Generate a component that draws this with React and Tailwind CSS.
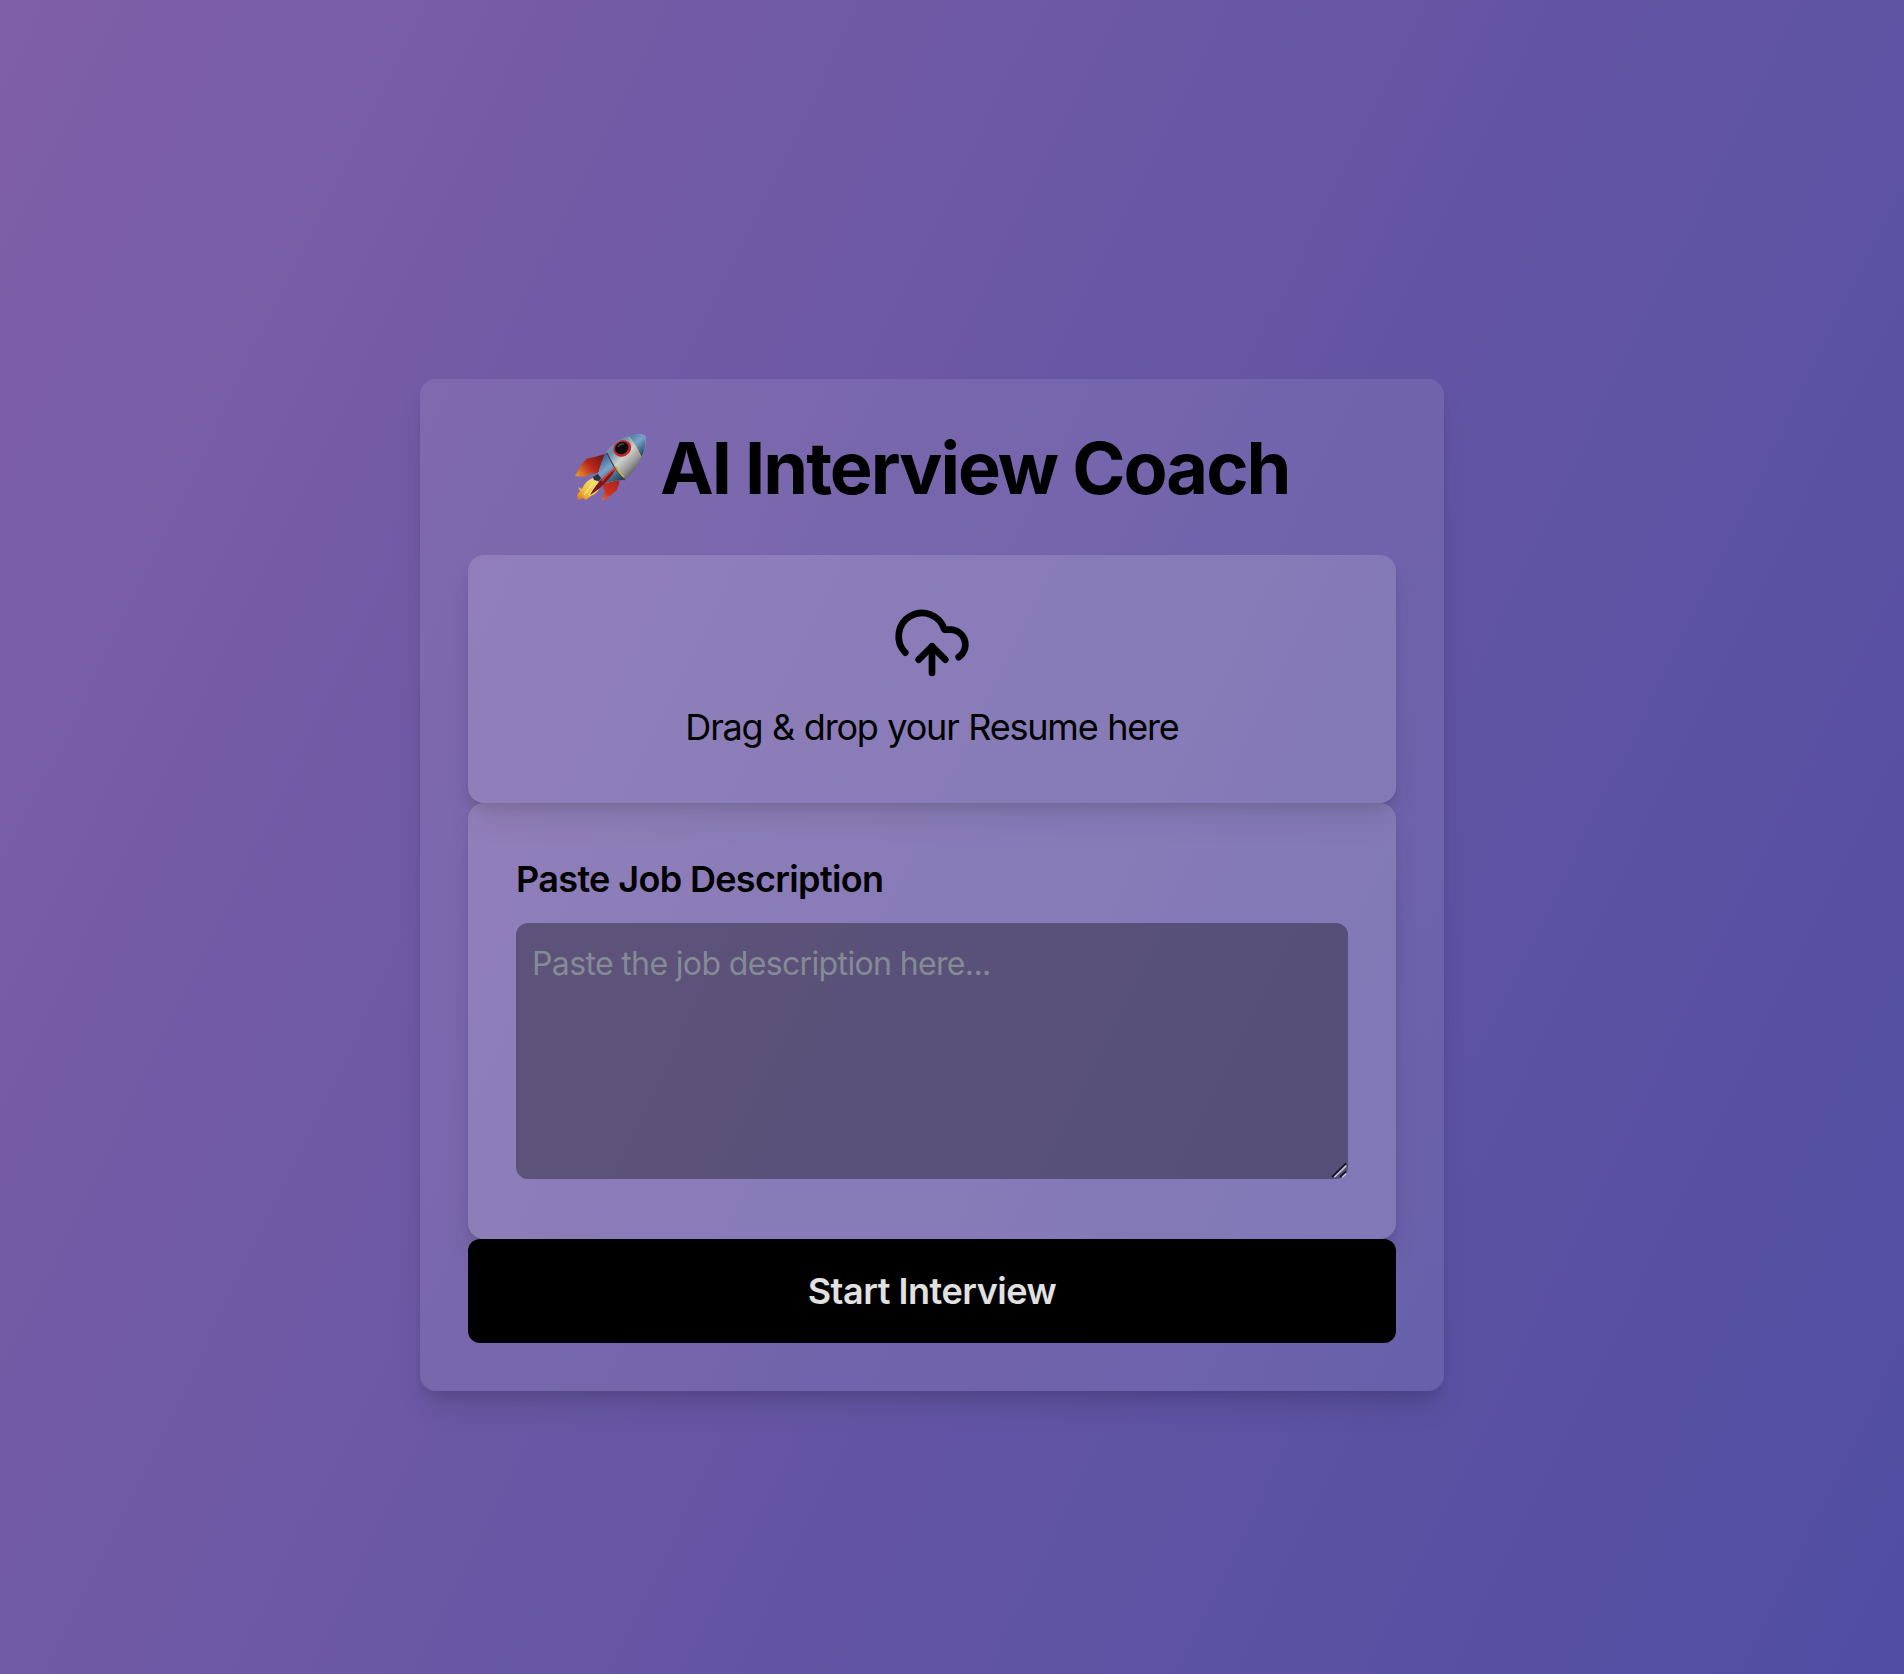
import React from "react";
import { CloudUpload } from "lucide-react";

function Rocket() {
  return (
    <svg viewBox="0 0 100 90" className="-mt-1 h-[90px] w-[100px] shrink-0" aria-hidden="true">
      <defs>
        <linearGradient id="hull" x1="50" y1="35" x2="73" y2="57" gradientUnits="userSpaceOnUse">
          <stop offset="0" stopColor="#6f8fae" />
          <stop offset=".35" stopColor="#d0d0ce" />
          <stop offset=".65" stopColor="#a0a09e" />
          <stop offset="1" stopColor="#4d5052" />
        </linearGradient>
        <linearGradient id="nose" x1="69" y1="16" x2="84" y2="33" gradientUnits="userSpaceOnUse">
          <stop offset="0" stopColor="#4f7aa8" />
          <stop offset=".45" stopColor="#7ba3c8" />
          <stop offset="1" stopColor="#244a70" />
        </linearGradient>
        <linearGradient id="belt" x1="42" y1="38" x2="60" y2="60" gradientUnits="userSpaceOnUse">
          <stop offset="0" stopColor="#40658f" />
          <stop offset=".4" stopColor="#7ba3cc" />
          <stop offset="1" stopColor="#29435f" />
        </linearGradient>
        <linearGradient id="finLeft" x1="40" y1="36" x2="17" y2="57" gradientUnits="userSpaceOnUse">
          <stop offset="0" stopColor="#7c1715" />
          <stop offset=".45" stopColor="#b92a1b" />
          <stop offset="1" stopColor="#e8982f" />
        </linearGradient>
        <linearGradient id="finRight" x1="56" y1="56" x2="44" y2="80" gradientUnits="userSpaceOnUse">
          <stop offset="0" stopColor="#a81f1b" />
          <stop offset=".7" stopColor="#c9321f" />
          <stop offset="1" stopColor="#e06a2c" />
        </linearGradient>
        <linearGradient id="flame" x1="36" y1="60" x2="20" y2="80" gradientUnits="userSpaceOnUse">
          <stop offset="0" stopColor="#f3dc72" />
          <stop offset=".6" stopColor="#efc23c" />
          <stop offset="1" stopColor="#e07a20" />
        </linearGradient>
      </defs>
      <path d="M45 34 Q36 37 27 38.5 Q22 42 15 56 Q23 57 28 56 Q30 51 34 54 L41 51Z" fill="url(#finLeft)" />
      <path d="M60 58 Q54 61 44 64 Q42 68 45 71 Q43 75 42 81 Q51 76 57 70 Q59 65 60 58Z" fill="url(#finRight)" />
      <path d="M33 58 Q25 61 22 69 L18 67 L20 71 L17 75 L18 80 L23 78 L26 80 L31 76 Q40 73 40 63Z" fill="url(#flame)" />
      <path d="M33 63 L24 75 M37 64 L29 75" stroke="#fff0a0" strokeWidth="1.5" opacity=".6" />
      <path d="M46 32 Q55 20 69 16 Q84 12 85.5 17 Q87 29 78 44 Q72 55 64 60 Q55 60 47 63 L38 55 Q41 42 46 32Z" fill="url(#hull)" />
      <path d="M46 32 Q41 42 38 55 L47 63 Q55 60 65 60 Q55 51 46 32Z" fill="url(#belt)" />
      <path d="M69 16 Q84 12 85.5 17 Q86 28 81 38 Q77 26 69 16Z" fill="url(#nose)" />
      <path d="M47 33 Q55 51 65 60" fill="none" stroke="#39434b" strokeWidth="1.2" />
      <path d="M55 46 Q59 53 64 57" fill="none" stroke="#c6b44d" strokeWidth="1.6" />
      <path d="M69 17 Q77 26 81 37" fill="none" stroke="#c9ba71" strokeWidth="1" />
      <path d="M33 57 L38 54 L41 58 L39 61 L34 60Z" fill="#25343b" />
      <path d="M56 48 Q50 52 43 58 Q36 64 30 75 Q40 69 47 61 Q53 55 56 48Z" fill="#7d1514" />
      <path d="M56 48 Q48 53 42 61" fill="none" stroke="#dc3a2b" strokeWidth="2" />
      <ellipse cx="62.3" cy="28.5" rx="9.2" ry="7.9" transform="rotate(-28 62.3 28.5)" fill="#c42323" />
      <ellipse cx="61.8" cy="28" rx="6.9" ry="6" transform="rotate(-28 61.8 28)" fill="#090b0c" />
      <path d="M58 27 Q60 23 64 24" fill="none" stroke="#4a5358" strokeWidth="1.2" />
    </svg>
  );
}

function ResizeHandle() {
  return (
    <svg viewBox="0 0 18 18" className="pointer-events-none absolute right-0 bottom-0 size-[18px]" aria-hidden="true">
      <path d="M4.2 16 16 4.6M12 16 16 12.4" stroke="#c4c0cc" strokeWidth="2.2" />
      <path d="M2 16 16 2.4M10 16 16 10.4" stroke="#17132b" strokeWidth="1.8" />
    </svg>
  );
}

const panel =
  "rounded-2xl bg-white/15 p-12 shadow-[0_20px_30px_-6px_rgba(0,0,0,0.12),0_8px_12px_-4px_rgba(0,0,0,0.12)]";

export default function App() {
  return (
    <div className="flex h-[1674px] w-full items-start overflow-hidden bg-[linear-gradient(116deg,#7f5fa8,#6756a4_50%,#504da2)] pt-[379px] pl-[420px] font-['Inter',sans-serif] text-black">
      <main className="w-[1024px] rounded-2xl bg-white/9 p-12 shadow-[0_20px_30px_-6px_rgba(0,0,0,0.12),0_8px_12px_-4px_rgba(0,0,0,0.1)]">
        <h1 className="mb-12 flex h-20 items-center pl-[92px] text-[72px] leading-[80px] font-bold whitespace-nowrap">
          <Rocket />
          <span className="pt-0.5 tracking-[-1.98px]">AI Interview Coach</span>
        </h1>

        <section className={panel}>
          <div className="flex flex-col items-center gap-4">
            <CloudUpload size={80} />
            <p className="text-4xl leading-[56px] whitespace-nowrap">
              <span className="font-[430] tracking-[-1.2px] [word-spacing:0.8px]">Drag &amp; drop your Resume here</span>
            </p>
          </div>
        </section>

        <section className={panel}>
          <label htmlFor="job" className="mb-4 block text-4xl leading-[56px] font-semibold">
            <span className="tracking-[-0.65px]">Paste Job Description</span>
          </label>
          <div className="relative mb-3 h-64">
            <textarea
              id="job"
              placeholder="Paste the job description here..."
              className="block h-64 w-full resize-none rounded-xl bg-black/34 px-4 pt-[17px] pb-[15px] text-[32px] leading-[48px] tracking-[-0.64px] outline-none placeholder:text-[#848b94]"
            />
            <ResizeHandle />
          </div>
        </section>

        <button className="block w-full rounded-xl bg-black py-6 text-4xl leading-[56px] font-semibold text-[#e1e1e1]">
          <span className="tracking-[-0.47px]">Start Interview</span>
        </button>
      </main>
    </div>
  );
}
